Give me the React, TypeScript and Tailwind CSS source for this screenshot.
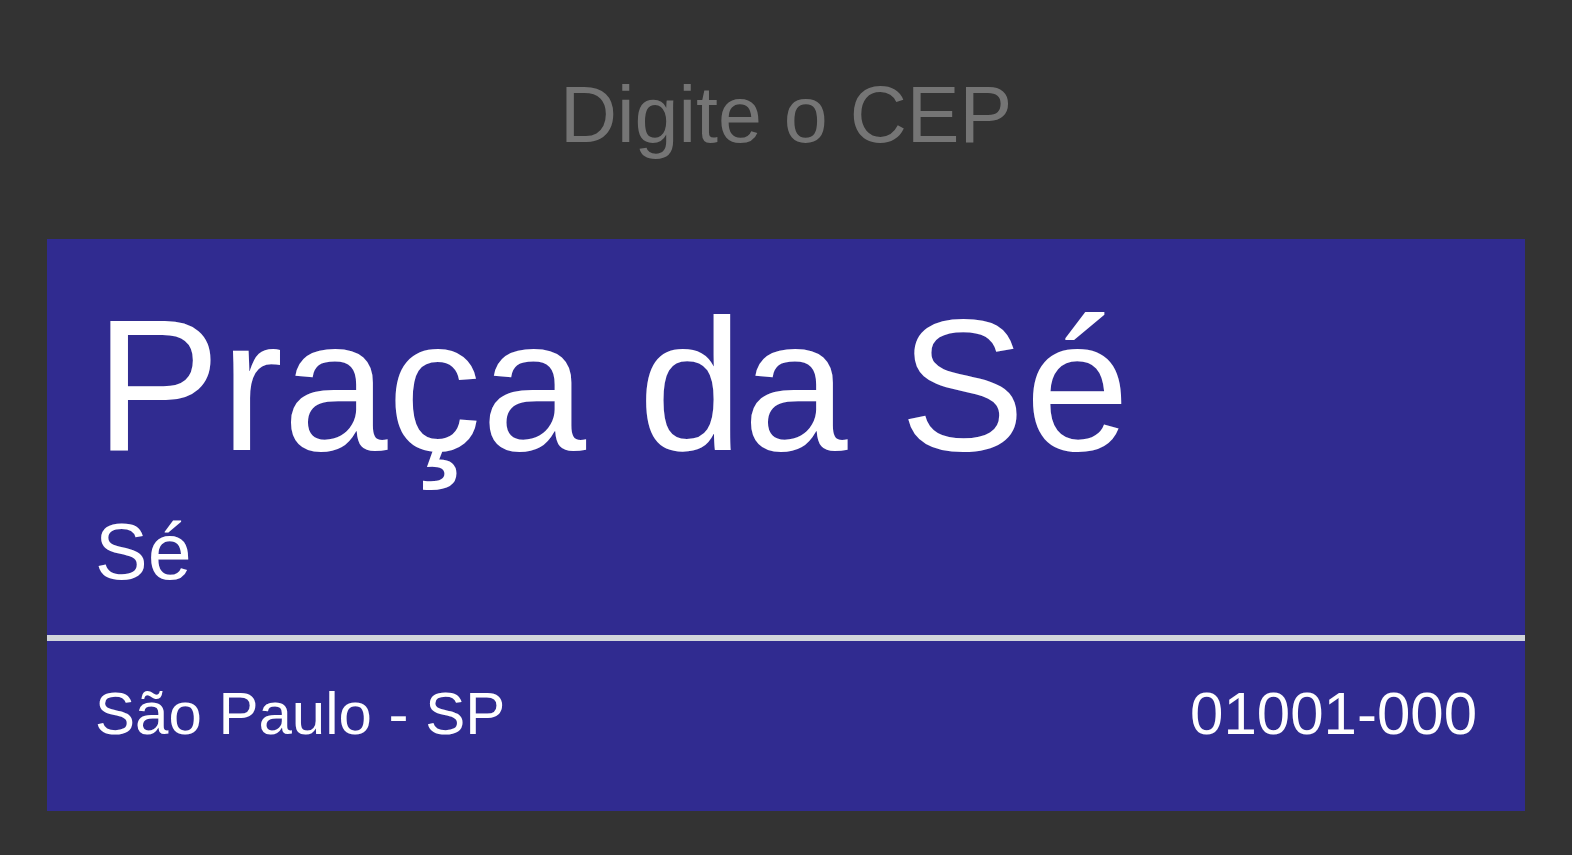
export default function App() {
  return (
    <div
      className="min-h-screen w-full bg-[#333333] flex flex-col items-center"
      style={{ fontFamily: '"Liberation Sans", Arial, sans-serif' }}
    >
      <h1 className="mt-[70px] text-[79px] leading-[1.149] text-[#757575] font-normal">
        Digite o CEP
      </h1>
      <div className="mt-[78px] w-[1478px] bg-[#302b90] text-white">
        <div className="px-12 pt-[38px] pb-[37px]">
          <div className="text-[188px] leading-[1.149]">Praça da Sé</div>
          <div className="mt-[14px] text-[79px] leading-[1.149]">Sé</div>
        </div>
        <div className="h-[6px] bg-[#d1d5db]" />
        <div className="px-12 pt-[39px] pb-[63px] flex justify-between text-[60px] leading-[1.149]">
          <span>São Paulo - SP</span>
          <span>01001-000</span>
        </div>
      </div>
    </div>
  );
}
